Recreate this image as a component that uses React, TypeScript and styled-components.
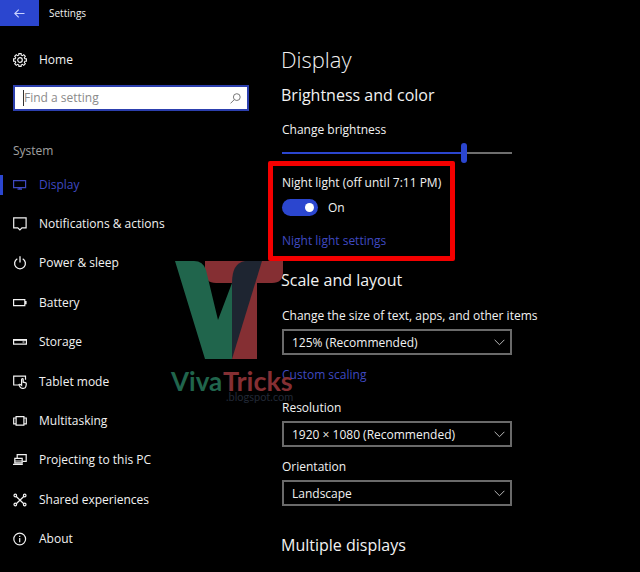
import React from "react";
import styled, { createGlobalStyle } from "styled-components";

const ACCENT = "#2b46cf";
const LINK = "#3f49c0";

const GlobalStyle = createGlobalStyle`
  * { box-sizing: border-box; }
  html, body { margin: 0; background: #000; }
  body, button, input, select {
    font-family: "Open Sans", "Noto Sans", sans-serif;
    color: #f2f2f2;
  }
`;

const Page = styled.div`
  position: relative;
  min-height: 100vh;
  overflow: hidden;
  background: #000;
`;

const TitleBar = styled.header`
  display: flex;
  align-items: center;
  gap: 10px;
  height: 26px;
  font-size: 10px;
`;

const BackButton = styled.button`
  display: flex;
  align-items: center;
  justify-content: center;
  width: 39px;
  height: 26px;
  padding: 0;
  border: 0;
  background: ${ACCENT};
`;

const Columns = styled.div`
  display: grid;
  grid-template-columns: 268px 1fr;
`;

const Sidebar = styled.aside`
  display: flex;
  flex-direction: column;
  padding-top: 20px;
`;

const NavLink = styled.a<{ $active?: boolean }>`
  position: relative;
  display: flex;
  align-items: center;
  gap: 12px;
  min-height: 28px;
  padding-left: 13px;
  font-size: 12px;
  line-height: 20px;
  text-decoration: none;
  color: ${(p) => (p.$active ? LINK : "#f2f2f2")};

  &::before {
    content: "";
    position: absolute;
    left: 0;
    width: 3px;
    height: 20px;
    background: ${(p) => (p.$active ? ACCENT : "transparent")};
  }
`;

const SearchBox = styled.label`
  display: flex;
  align-items: center;
  height: 26px;
  margin: 11px 19px 0 13px;
  padding: 0 6px 0 8px;
  border: 2px solid #2c3fae;
  background: #fff;
`;

const Caret = styled.span`
  width: 1px;
  height: 16px;
  background: #333;
`;

const SearchInput = styled.input`
  flex: 1;
  min-width: 0;
  padding: 0;
  border: 0;
  outline: 0;
  background: transparent;
  color: #222;
  font-size: 12px;
  line-height: 20px;

  &::placeholder { color: #8a8a8a; opacity: 1; }
`;

const GroupTitle = styled.h2`
  margin: 30px 0 4px 13px;
  font-size: 12px;
  font-weight: 400;
  line-height: 20px;
  color: #a0a0a0;
`;

const NavList = styled.nav`
  display: grid;
  grid-auto-rows: 1fr;
  align-items: center;
  height: 394px;
`;

const Main = styled.main`
  padding: 17px 16px 12px 0;
`;

const PageTitle = styled.h1`
  margin: 0 0 0 13px;
  font-size: 22px;
  font-weight: 300;
  line-height: 32px;
`;

const SectionTitle = styled.h2<{ $top: number }>`
  margin: ${(p) => p.$top}px 0 0 13px;
  font-size: 16px;
  font-weight: 400;
  line-height: 24px;
`;

const Field = styled.div<{ $top: number }>`
  display: flex;
  flex-direction: column;
  align-items: flex-start;
  margin: ${(p) => p.$top}px 0 0 14px;
`;

const Label = styled.label`
  font-size: 12px;
  line-height: 20px;
`;

const Slider = styled.input`
  appearance: none;
  width: 100%;
  max-width: 230px;
  height: 20px;
  margin: 3px 0 0;
  background: transparent;

  &::-webkit-slider-runnable-track {
    height: 2px;
    background: linear-gradient(to right, ${ACCENT} 79%, #6e6e6e 79%);
  }
  &::-webkit-slider-thumb {
    appearance: none;
    width: 6px;
    height: 20px;
    margin-top: -9px;
    border-radius: 3px;
    background: ${ACCENT};
  }
`;

const Highlight = styled.section`
  width: 187px;
  height: 100px;
  margin-top: -2px;
  padding: 7px 0 0 9px;
  border: 5px solid #f40000;
  border-radius: 2px;
`;

const HighlightText = styled.div`
  font-size: 12px;
  line-height: 20px;
  white-space: nowrap;
`;

const ToggleRow = styled.label`
  display: flex;
  align-items: center;
  gap: 10px;
  height: 18px;
  margin: 5px 0 12px;
  font-size: 12px;
`;

const Toggle = styled.input`
  appearance: none;
  display: flex;
  align-items: center;
  justify-content: flex-end;
  width: 36px;
  height: 17px;
  margin: 0;
  padding-right: 4px;
  border-radius: 9px;
  background: ${ACCENT};

  &::before {
    content: "";
    width: 9px;
    height: 9px;
    border-radius: 50%;
    background: #fff;
  }
  &:not(:checked) { justify-content: flex-start; padding-left: 4px; background: #555; }
`;

const TextLink = styled.a`
  font-size: 12px;
  line-height: 20px;
  color: ${LINK};
  text-decoration: none;
`;

const SelectBox = styled.div`
  display: grid;
  align-items: center;
  width: 100%;
  max-width: 230px;
  margin-top: 3px;

  & > * { grid-area: 1 / 1; }
  & > svg { justify-self: end; margin-right: 7px; pointer-events: none; }
`;

const Select = styled.select`
  appearance: none;
  width: 100%;
  height: 26px;
  padding: 0 24px 0 8px;
  border: 2px solid #6a6a6a;
  border-radius: 0;
  background: #000;
  font-size: 12px;
`;

const Watermark = styled.svg`
  position: absolute;
  left: 168px;
  top: 258px;
  pointer-events: none;
`;

const Icon = ({ children }: { children: React.ReactNode }) => (
  <svg width="14" height="14" viewBox="0 0 14 14" fill="none" stroke="currentColor" strokeWidth="1.2" aria-hidden="true">
    {children}
  </svg>
);

const teeth = Array.from({ length: 8 }, (_, i) => {
  const point = (r: number, deg: number) => {
    const a = ((i * 45 + deg) * Math.PI) / 180;
    return `${(7 + r * Math.cos(a)).toFixed(2)} ${(7 + r * Math.sin(a)).toFixed(2)}`;
  };
  return [point(5, -15), point(6.5, -10), point(6.5, 10), point(5, 15)].join("L");
});

const icons = {
  gear: (
    <>
      <path d={`M${teeth.join("L")}Z`} strokeWidth="1.1" />
      <circle cx="7" cy="7" r="2.3" />
    </>
  ),
  display: <path d="M.6 2.6h12v7H.6zM4.5 11.2h4.5M6.7 9.6v1.6" />,
  notifications: <path d="M.7 .9h12.4v10H9L6.9 13 4.8 10.9H.7z" />,
  power: <path d="M4.3 2.7a5.4 5.4 0 1 0 5.4 0M7 .3v6.2" strokeWidth="1.3" />,
  battery: <path d="M.6 3.6h11.2v6H.6zM13 5v3.2" />,
  storage: (
    <>
      <path d="M.6 4.6h12.8v4.6H.6z" />
      <path d="M9.5 7h2M1 5.3h12" strokeWidth="1" />
    </>
  ),
  tablet: (
    <>
      <path d="M5.5 10H.7V1.2h11.8v3.6" />
      <path d="M8.6 8.6V4.4a.8.8 0 0 1 1.6 0v2.8l2.1.5c.9.2 1.1.7 1 1.4l-.4 2.2a2.4 2.4 0 0 1-2.4 2H9.4a2.8 2.8 0 0 1-2.2-1.2L5.8 9.7c.6-.8 1.6-.5 2.8.7z" />
    </>
  ),
  multitasking: <path d="M3.1 2.6h7.8v8.6H3.1zM3 4H.7v5.8H3M11 4h2.3v5.8H11" />,
  project: (
    <>
      <path d="M4.2 5.2V1.6h9v6.8H9.6" />
      <path d="M1.8 5.4h7.4v4.4H1.8zM0 11.3h9.8M2 8h7" />
    </>
  ),
  shared: (
    <>
      <path d="M3 3.2 11 11M11 3.2 3 11" />
      <circle cx="2.3" cy="2.5" r="1.3" />
      <circle cx="11.7" cy="2.5" r="1.3" />
      <circle cx="2.3" cy="11.5" r="1.3" />
      <circle cx="11.7" cy="11.5" r="1.3" />
    </>
  ),
  about: (
    <>
      <circle cx="6.7" cy="7" r="5.9" />
      <path d="M6.7 6v4.2M6.7 3.8v1.2" />
    </>
  ),
};

const navItems: { icon: keyof typeof icons; label: string; active?: boolean }[] = [
  { icon: "display", label: "Display", active: true },
  { icon: "notifications", label: "Notifications & actions" },
  { icon: "power", label: "Power & sleep" },
  { icon: "battery", label: "Battery" },
  { icon: "storage", label: "Storage" },
  { icon: "tablet", label: "Tablet mode" },
  { icon: "multitasking", label: "Multitasking" },
  { icon: "project", label: "Projecting to this PC" },
  { icon: "shared", label: "Shared experiences" },
  { icon: "about", label: "About" },
];

const DropDown = ({ id, value }: { id: string; value: string }) => (
  <SelectBox>
    <Select id={id} defaultValue={value}>
      <option>{value}</option>
    </Select>
    <svg width="11" height="7" viewBox="0 0 11 7" fill="none" stroke="#b8b8b8" aria-hidden="true">
      <path d="M.6 .8 5.5 5.7 10.4 .8" />
    </svg>
  </SelectBox>
);

export default function App() {
  return (
    <Page>
      <GlobalStyle />
      <TitleBar>
        <BackButton aria-label="Back">
          <svg width="11" height="9" viewBox="0 0 11 9" fill="none" stroke="#c9d2ff" strokeWidth="1.1">
            <path d="M10.5 4.5H.8M4.7 .6.8 4.5l3.9 3.9" />
          </svg>
        </BackButton>
        <span>Settings</span>
      </TitleBar>
      <Columns>
        <Sidebar>
          <NavLink href="#home">
            <Icon>{icons.gear}</Icon>
            Home
          </NavLink>
          <SearchBox>
            <Caret />
            <SearchInput type="text" placeholder="Find a setting" aria-label="Find a setting" />
            <svg width="11" height="11" viewBox="0 0 11 11" fill="none" stroke="#777" aria-hidden="true">
              <circle cx="6.8" cy="4.1" r="3.4" />
              <path d="M4.3 6.6.5 10.4" />
            </svg>
          </SearchBox>
          <GroupTitle>System</GroupTitle>
          <NavList>
            {navItems.map((item) => (
              <NavLink key={item.icon} href={`#${item.icon}`} $active={item.active}>
                <Icon>{icons[item.icon]}</Icon>
                {item.label}
              </NavLink>
            ))}
          </NavList>
        </Sidebar>
        <Main>
          <PageTitle>Display</PageTitle>
          <SectionTitle $top={8}>Brightness and color</SectionTitle>
          <Field $top={13}>
            <Label htmlFor="brightness">Change brightness</Label>
            <Slider id="brightness" type="range" defaultValue={80} />
          </Field>
          <Highlight>
            <HighlightText>Night light (off until 7:11 PM)</HighlightText>
            <ToggleRow>
              <Toggle type="checkbox" role="switch" defaultChecked />
              On
            </ToggleRow>
            <TextLink href="#night-light">Night light settings</TextLink>
          </Highlight>
          <SectionTitle $top={7}>Scale and layout</SectionTitle>
          <Field $top={14}>
            <Label htmlFor="scale">Change the size of text, apps, and other items</Label>
            <DropDown id="scale" value="125% (Recommended)" />
          </Field>
          <Field $top={10}>
            <TextLink href="#custom-scaling">Custom scaling</TextLink>
          </Field>
          <Field $top={13}>
            <Label htmlFor="resolution">Resolution</Label>
            <DropDown id="resolution" value="1920 × 1080 (Recommended)" />
          </Field>
          <Field $top={10}>
            <Label htmlFor="orientation">Orientation</Label>
            <DropDown id="orientation" value="Landscape" />
          </Field>
          <SectionTitle $top={27}>Multiple displays</SectionTitle>
        </Main>
      </Columns>
      <Watermark width="130" height="150" viewBox="168 258 130 150" aria-label="VivaTricks.blogspot.com">
        <path d="M205 261h78v11q0 11-11 11h-15v76h-25V283h-16q-11 0-11-11z" fill="#852f33" />
        <path d="M175 261h19q9 0 12 9l12 50 14-37v76h-27z" fill="#20654c" />
        <path d="M262 261h-17q-13 2-13 22v76z" fill="#1e2531" />
        <g fontFamily="Lato, sans-serif" fontWeight="700">
          <text x="171" y="391" fontSize="26" fill="#20654c">Viva</text>
          <text x="223" y="391" fontSize="27" fill="#852f33">Tricks</text>
        </g>
        <text x="226" y="401" fontSize="11" fontFamily="Lato, sans-serif" fill="#222936">.blogspot.com</text>
      </Watermark>
    </Page>
  );
}
